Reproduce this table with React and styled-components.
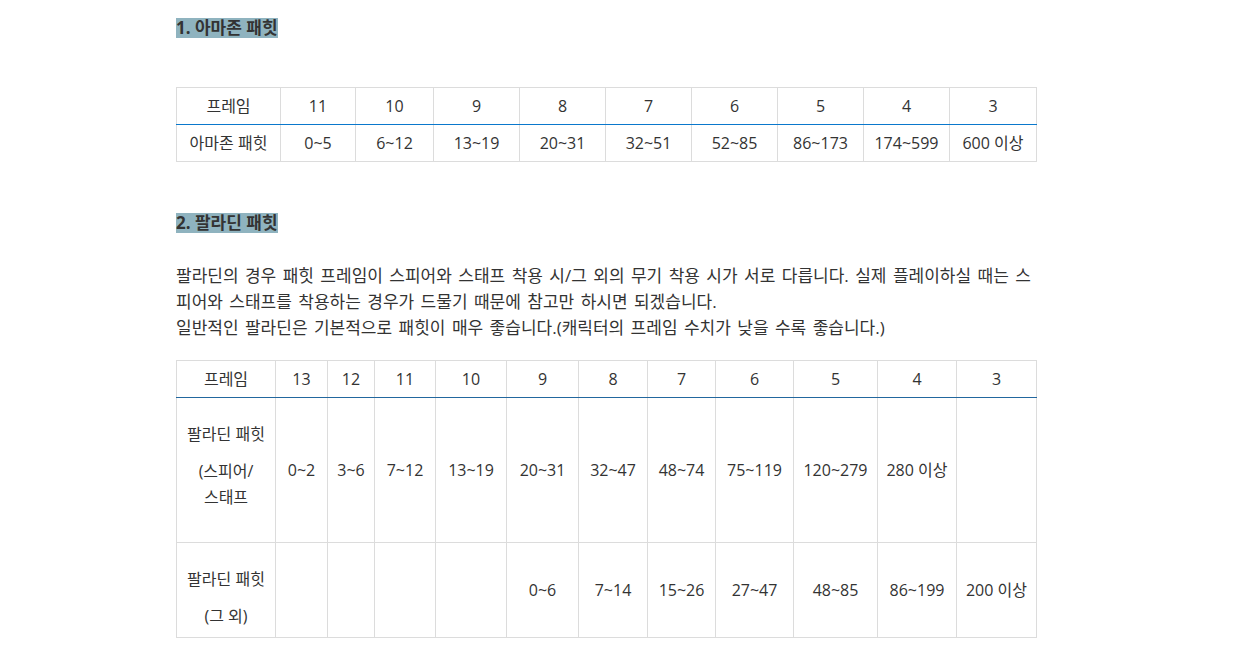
import React from "react";
import styled, { createGlobalStyle } from "styled-components";

const Global = createGlobalStyle`
  html, body { margin: 0; padding: 0; background: #fff; }
  body {
    font-family: "Open Sans", "Noto Sans CJK KR", sans-serif;
    color: #333;
  }
`;

const Page = styled.div`
  width: 860px;
  padding: 18px 0 0 176px;
`;

const Heading = styled.h3`
  margin: ${(p) => p.$top || 0}px 0 0;
  font-size: 17px;
  line-height: 20px;
  font-weight: 700;
  color: #333;
`;

const Mark = styled.span`
  display: inline-block;
  line-height: 20px;
  background: #8fb3bf;
`;

const Table = styled.table`
  width: 860px;
  border-collapse: collapse;
  table-layout: fixed;
  margin-top: ${(p) => p.$top}px;
  font-size: 16px;
  color: #333;
`;

const Col = styled.col`
  width: ${(p) => p.$w}px;
`;

const HeadRow = styled.tr`
  height: 37px;
  border-bottom: 1px solid ${(p) => p.$line};
`;

const Row = styled.tr`
  height: ${(p) => p.$h}px;
`;

const Cell = styled.td`
  border: 1px solid #dcdcdc;
  text-align: center;
  vertical-align: middle;
  padding: 0 2px;
  line-height: 26px;
  white-space: nowrap;
`;

const HeadCell = styled(Cell)`
  border-bottom: 1px solid ${(p) => p.$line};
`;

const LabelCell = styled(Cell)`
  vertical-align: top;
  padding-top: ${(p) => p.$pt}px;
`;

const LabelLines = styled.div`
  display: flex;
  flex-direction: column;
  gap: 11px;
`;

const Para = styled.p`
  margin: 30px 0 0;
  font-size: 17px;
  line-height: 26px;
  word-spacing: 2px;
  color: #333;
`;

const t1Cols = [104, 75, 78, 86, 86, 86, 86, 86, 86, 87];
const t1Head = ["프레임", "11", "10", "9", "8", "7", "6", "5", "4", "3"];
const t1Body = ["아마존 패힛", "0~5", "6~12", "13~19", "20~31", "32~51", "52~85", "86~173", "174~599", "600 이상"];

const t2Cols = [99, 52, 47, 61, 71, 72, 69, 68, 78, 84, 79, 80];
const t2Head = ["프레임", "13", "12", "11", "10", "9", "8", "7", "6", "5", "4", "3"];
const t2Row1 = ["0~2", "3~6", "7~12", "13~19", "20~31", "32~47", "48~74", "75~119", "120~279", "280 이상", ""];
const t2Row2 = ["", "", "", "", "0~6", "7~14", "15~26", "27~47", "48~85", "86~199", "200 이상"];

export default function App() {
  return (
    <>
      <Global />
      <Page>
        <Heading>
          <Mark>1. 아마존 패힛</Mark>
        </Heading>

        <Table $top={49}>
          <colgroup>
            {t1Cols.map((w, i) => (
              <Col key={i} $w={w} />
            ))}
          </colgroup>
          <tbody>
            <HeadRow $line="#0a78cc">
              {t1Head.map((v, i) => (
                <HeadCell key={i} $line="#0a78cc">{v}</HeadCell>
              ))}
            </HeadRow>
            <Row $h={37}>
              {t1Body.map((v, i) => (
                <Cell key={i}>{v}</Cell>
              ))}
            </Row>
          </tbody>
        </Table>

        <Heading $top={51}>
          <Mark>2. 팔라딘 패힛</Mark>
        </Heading>

        <Para>
          팔라딘의 경우 패힛 프레임이 스피어와 스태프 착용 시/그 외의 무기 착용 시가 서로 다릅니다. 실제 플레이하실 때는 스피어와 스태프를 착용하는 경우가 드물기 때문에 참고만 하시면 되겠습니다.
          <br />
          일반적인 팔라딘은 기본적으로 패힛이 매우 좋습니다.(캐릭터의 프레임 수치가 낮을 수록 좋습니다.)
        </Para>

        <Table $top={19}>
          <colgroup>
            {t2Cols.map((w, i) => (
              <Col key={i} $w={w} />
            ))}
          </colgroup>
          <tbody>
            <HeadRow $line="#22679e">
              {t2Head.map((v, i) => (
                <HeadCell key={i} $line="#22679e">{v}</HeadCell>
              ))}
            </HeadRow>
            <Row $h={145}>
              <LabelCell $pt={23}>
                <LabelLines>
                  <span>팔라딘 패힛</span>
                  <span>(스피어/<br />스태프</span>
                </LabelLines>
              </LabelCell>
              {t2Row1.map((v, i) => (
                <Cell key={i}>{v}</Cell>
              ))}
            </Row>
            <Row $h={95}>
              <LabelCell $pt={23}>
                <LabelLines>
                  <span>팔라딘 패힛</span>
                  <span>(그 외)</span>
                </LabelLines>
              </LabelCell>
              {t2Row2.map((v, i) => (
                <Cell key={i}>{v}</Cell>
              ))}
            </Row>
          </tbody>
        </Table>
      </Page>
    </>
  );
}
